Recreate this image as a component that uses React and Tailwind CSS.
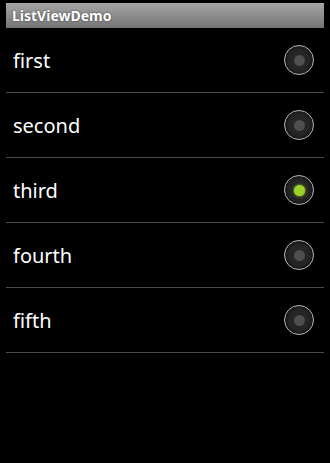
import React, { useState } from 'react';

const items = ['first', 'second', 'third', 'fourth', 'fifth'];

const Radio = ({ checked }) => (
    <div className="w-[30px] h-[30px] rounded-full border-[1.5px] border-[#b5b5b5] bg-[#262626] flex items-center justify-center shadow-[inset_0_0_4px_rgba(0,0,0,0.9)]">
        <div
            className={
                checked
                    ? 'w-[11px] h-[11px] rounded-full bg-[#9bd32a] shadow-[0_0_3px_#9bd32a]'
                    : 'w-[11px] h-[11px] rounded-full bg-[#4f4f4f]'
            }
        />
    </div>
);

const App = () => {
    const [selected, setSelected] = useState(2);

    return (
        <div className="w-[330px] h-[463px] bg-black px-[6px] pt-[3px] font-['Noto_Sans',sans-serif]">
            <div className="h-[25px] bg-gradient-to-b from-[#a6a6a6] to-[#757575] flex items-center pl-[6px]">
                <span className="text-white text-[14px] font-bold [text-shadow:0_0_2px_rgba(0,0,0,0.6)]">ListViewDemo</span>
            </div>
            <ul>
                {items.map((item, i) => (
                    <li
                        key={item}
                        onClick={() => setSelected(i)}
                        className="h-[65px] border-b border-[#4a4a4a] flex items-center justify-between pl-[7px] pr-[10px] cursor-pointer"
                    >
                        <span className="text-white text-[20px] pt-[2px]">{item}</span>
                        <Radio checked={selected === i} />
                    </li>
                ))}
            </ul>
        </div>
    );
};

export default App;
